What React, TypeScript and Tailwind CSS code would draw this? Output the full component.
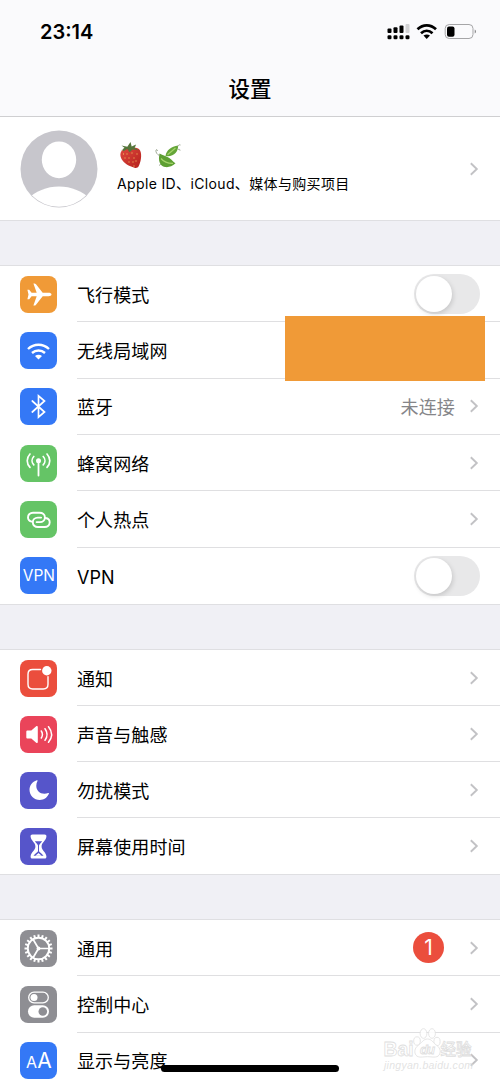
import type { ReactNode } from 'react';

interface RowProps {
  icon: ReactNode;
  color: string;
  label: string;
  children?: ReactNode;
  last?: boolean;
  chevron?: boolean;
}

function Chevron() {
  return (
    <svg className="mr-[1px] shrink-0" width="10" height="14" viewBox="0 0 10 14" fill="none" stroke="#c2c2c5" strokeWidth="1.9">
      <path d="M1.8 1.200 7.800 7l-6 5.800" />
    </svg>
  );
}

function Toggle() {
  return (
    <div className="h-10 w-[66px] rounded-full bg-[#e8e8e9] p-[2px]">
      <div className="size-[36px] rounded-full bg-white shadow-[1px_2px_5px_rgba(0,0,0,0.15)]" />
    </div>
  );
}

function Row({ icon, color, label, children, last, chevron = true }: RowProps) {
  return (
    <div className="flex min-h-0 flex-1 items-center pl-[20.4px]">
      <div className={`flex size-[37px] shrink-0 items-center justify-center overflow-hidden rounded-[8px] ${color}`}>{icon}</div>
      <div className={`ml-[19.6px] flex h-full flex-1 items-center justify-between pr-5 ${last ? '' : 'border-b border-[#dfdfe1]'}`}>
        <span className="pt-[4px] text-[18px] leading-6 tracking-[0.1px]">{label}</span>
        <div className="flex items-center">
          {children}
          {chevron && <Chevron />}
        </div>
      </div>
    </div>
  );
}

function Glyph({ children }: { children: ReactNode }) {
  return (
    <svg width="37" height="37" viewBox="0 0 37 37" fill="none" stroke="white" strokeLinecap="round" strokeLinejoin="round">
      {children}
    </svg>
  );
}

const airplane = (
  <Glyph>
    <path fill="white" stroke="none" d="M31.5 18.5c0-1.1-1.4-1.7-3-1.7h-5.8L16 8.2c-.5-.6-1-.8-1.6-.8h-1l3.300 9.400h-5.100l-2.400-3H7.400l1.100 4.700-1.100 4.700h1.800l2.400-3h5.100l-3.300 9.400h1c.6 0 1.100-.2 1.600-.8l6.700-8.600h5.800c1.600 0 3-.6 3-1.700z" />
  </Glyph>
);

const wifi = (
  <Glyph>
    <path strokeWidth="2.4" strokeLinecap="butt" d="M8 17c6-5.700 15-5.700 21 0M12 21c3.800-3.400 9.200-3.400 13 0" />
    <path fill="white" stroke="none" d="M15 24c2-1.800 5-1.800 7 0l-3.500 3.500z" />
  </Glyph>
);

const bluetooth = (
  <Glyph>
    <path strokeWidth="1.7" strokeLinejoin="miter" d="M12.3 13 24.500 24l-6 5.200v-21.400l6 5.200L12.300 24" />
  </Glyph>
);

const cellular = (
  <Glyph>
    <circle cx="18.5" cy="15.7" r="2.5" fill="white" stroke="none" />
    <path strokeWidth="1.8" d="M18.5 16v14.5" />
    <path strokeWidth="1.7" d="M13.8 11.5c-2.300 2.400-2.300 6 0 8.400M23.200 11.500c2.300 2.400 2.300 6 0 8.400M10 9c-3.700 4-3.700 9.400 0 13.400M27 9c3.700 4 3.700 9.400 0 13.400" />
  </Glyph>
);

const hotspot = (
  <Glyph>
    <path strokeWidth="1.9" d="M11.8 20.600c-2.200-.5-3.800-2-3.800-4.200 0-2.800 2.100-4.700 5-4.700h6.600c3 0 5.300 1.800 5.300 4.700s-2.200 4.700-5 4.700h-3.300" />
    <path strokeWidth="1.9" d="M25.500 17c2.600.4 4.200 2 4.200 4.300 0 2.800-2.200 4.700-5 4.700h-6.800c-3 0-5.100-1.900-5.100-4.700s2.200-4.700 5-4.700h3.300" />
  </Glyph>
);

const notifications = (
  <Glyph>
    <path strokeWidth="1.4" d="M20.500 9.500h-7.800c-3 0-4.700 1.700-4.700 4.700v10.100c0 3 1.700 4.700 4.700 4.700h10.600c3 0 4.700-1.700 4.700-4.700v-7.500" />
    <circle cx="26.800" cy="10.800" r="4.700" fill="white" stroke="none" />
  </Glyph>
);

const sound = (
  <Glyph>
    <path fill="white" stroke="none" d="M7.600 14.500h3.700l4.900-4.200c.7-.6 1.600-.2 1.600.8v14.800c0 1-.9 1.400-1.600.8l-4.900-4.200H7.600c-.8 0-1.300-.5-1.300-1.300v-5.400c0-.8.5-1.300 1.300-1.300z" />
    <path strokeWidth="1.500" d="M21.300 15c1.500 2.300 1.500 4.700 0 7M25 12.700c2.700 3.800 2.700 7.800 0 11.600M28.500 10.700c4 5 4 10.600 0 15.600" />
  </Glyph>
);

const moon = (
  <Glyph>
    <path fill="white" stroke="none" d="M16.800 8.300c-4.600 1.500-7.300 5.300-7.300 9.500 0 5.700 4.500 10.200 10.300 10.200 4.200 0 7.800-2.600 9.200-6.400.2-.6-.3-.9-.8-.6-1.400.6-2.400.8-3.800.8-4.800 0-8.100-3.300-8.100-8 0-1.600.4-3.300 1.200-4.700.3-.5-.1-1-.7-.8z" />
  </Glyph>
);

const hourglass = (
  <Glyph>
    <path fill="white" stroke="none" d="M12.500 6.500h12c1.400 0 2.100.9 1.900 2.300-.5 4.200-4.800 5.700-4.800 9.700s4.300 5.500 4.800 9.700c.2 1.400-.5 2.300-1.900 2.300h-12c-1.400 0-2.100-.9-1.900-2.300.5-4.200 4.800-5.700 4.800-9.700s-4.300-5.500-4.800-9.700c-.2-1.400.5-2.300 1.900-2.300z" />
    <path fill="#5655ca" stroke="none" d="M14.800 13.300h7.400c-1 1.500-2.500 2.500-3.200 4.200v5.700c.8 1.300 3.300 2.500 4.500 4.500h-10c1.200-2 3.700-3.200 4.500-4.500v-5.700c-.7-1.700-2.200-2.700-3.200-4.200z" />
    <path fill="white" stroke="none" d="M18.500 25c1 1 2 1.500 3 2.700h-6c1-1.200 2-1.700 3-2.700z" />
  </Glyph>
);

const gear = (
  <Glyph>
    <circle cx="18.500" cy="18.500" r="10.700" strokeWidth="1.900" />
    {Array.from({ length: 20 }, (_, i) => (
      <path key={i} strokeWidth="2" strokeLinecap="butt" d="M18.500 7.800V4.500" transform={`rotate(${i * 18} 18.500 18.500)`} />
    ))}
    <circle cx="18.500" cy="18.500" r="1.900" fill="white" stroke="none" />
    <path strokeWidth="1.700" d="M18.500 18.500H29M18.500 18.500l-5.300-9M18.500 18.500l-5.300 9" />
  </Glyph>
);

const controls = (
  <Glyph>
    <rect x="8.700" y="6.200" width="19.600" height="10.600" rx="5.300" strokeWidth="1.300" />
    <circle cx="14" cy="11.500" r="3.500" fill="white" stroke="none" />
    <rect x="8" y="19.300" width="21" height="12.400" rx="6.200" fill="white" stroke="none" />
    <circle cx="22.800" cy="25.500" r="4.300" fill="#8e8e93" stroke="none" />
  </Glyph>
);

function StatusIcons() {
  return (
    <svg className="mt-px" width="92" height="20" viewBox="0 0 92 20">
      {[0, 6, 12, 18].map((x, i) => (
        <g key={x}>
          <rect x={1.500 + x} y={[6.500, 5.200, 3.500, 2][i]} width="4" height={[4.500, 5.800, 7.500, 9][i]} rx="1" fill={i === 3 ? '#d2d2d4' : '#000'} />
          <rect x={1.500 + x} y="13.200" width="4" height="4" rx="1.300" fill="#000" />
        </g>
      ))}
      <path d="M31.500 7.300c5.500-5.200 13-5.200 18.500 0M35 11.200c3.400-3.100 8.100-3.100 11.500 0" fill="none" stroke="#000" strokeWidth="2.700" />
      <path d="M37.500 13.600c2-1.600 4.500-1.600 6.500 0L40.700 16.900z" />
      <rect x="59.200" y="2.500" width="27.800" height="14" rx="4" fill="none" stroke="#a5a5a7" />
      <rect x="61" y="4.400" width="7.500" height="10.400" rx="2" />
      <path d="M88.700 7.500v4c1.800-.7 1.800-3.300 0-4" fill="#8e8e90" />
    </svg>
  );
}

function Avatar() {
  return (
    <svg className="shrink-0" width="78" height="78" viewBox="0 0 78 78">
      <defs>
        <clipPath id="avatar">
          <circle cx="39" cy="39" r="37.800" />
        </clipPath>
      </defs>
      <circle cx="39" cy="39" r="38.500" fill="#c7c6cc" />
      <g clipPath="url(#avatar)" fill="white">
        <ellipse cx="39" cy="29.800" rx="17.200" ry="18.400" />
        <path d="M7 70c16-18 48-18 64 0v10H7z" />
      </g>
    </svg>
  );
}

function Strawberry() {
  return (
    <svg width="26" height="30" viewBox="0 0 26 30">
      <defs>
        <linearGradient id="berry" x1="0" y1="0" x2="1" y2="1">
          <stop offset="0" stopColor="#df4a3e" />
          <stop offset="1" stopColor="#b5201d" />
        </linearGradient>
      </defs>
      <path d="M4.500 10c2-2.500 5-2.500 8-3 4-.8 8.700-1 10.600 2.500 2.200 4.200.6 12.500-1.600 16-.8 1.400-2.500 1.700-4 1.200C12 25.200 7 22.300 4.500 18c-1.500-3-1.600-5.700 0-8z" fill="url(#berry)" />
      <path d="M2.800 10.500 7.500 6.800 4.500 4.400l5.800 1.300L13.500 1l1.200 4.500 4.400-2-1.500 3.400 4 2.300-6-.7-3 2.700-2.300-3.200-4.500 2.500.3-2.200z" fill="#55753a" />
      <g fill="#eeb35d">
        {[[6.500, 13], [10, 13], [15, 12], [20, 13], [8, 17], [12, 17], [17, 17], [12, 21], [16, 21], [19, 20], [17, 25]].map(([x, y]) => (
          <ellipse key={`${x}-${y}`} cx={x} cy={y} rx=".55" ry=".8" />
        ))}
      </g>
    </svg>
  );
}

function Leaves() {
  return (
    <svg width="28" height="28" viewBox="0 0 28 28" fill="none">
      <path d="M5.500 11.500c3.300 2 7 2.700 9.800 4.600 3 2.100 4 4 6.200 5.200-3.500 3.300-7 4.200-10.500 3.700C5.800 24.300 4 18.500 5.500 11.500z" fill="#5d9f32" />
      <path d="M11.500 14c1-6 5.500-9.500 12.700-10.500-.2 6.500-4 11.500-12.700 10.500z" fill="#65a638" />
      <path d="M7 16.500c3 3.700 7 5 12 4.900M13.500 12.700l8-6.700" stroke="#a5d36b" strokeWidth="1.200" />
      <path d="M6 14C3 12.300 1.500 10.500 2 8c.7-.8 1.600 0 1.500 1M23.500 4.500c1.300-1.700 2.200-2 3-1.500M24 7.500c1.500-.7 2 0 2 1.200M5 23.500l2-1.500" stroke="#8c9880" strokeWidth=".8" />
    </svg>
  );
}

function Watermark() {
  return (
    <svg className="absolute top-[1026px] left-[380px]" width="98" height="50" viewBox="0 0 98 50" fill="#fff" fillOpacity=".9" stroke="#dedede" strokeWidth=".8" fontFamily="'Liberation Sans', 'Noto Sans CJK SC', sans-serif">
      <text x="3.500" y="30" fontSize="21" fontWeight="700" textLength="30" lengthAdjust="spacingAndGlyphs">Bai</text>
      <ellipse cx="37" cy="15" rx="3.300" ry="4.200" />
      <ellipse cx="43.500" cy="7.500" rx="3.400" ry="4.800" />
      <ellipse cx="52" cy="7.500" rx="3.400" ry="4.800" />
      <ellipse cx="57" cy="15.500" rx="3.100" ry="4.200" />
      <path d="M47.500 13c-4.500 0-5.500 4-9.500 6.500-3.500 2.700-4 7-2 9.700 2.300 3 7 1.500 11.500 1.500s9.200 1.500 11.500-1.500c2-2.700 1.500-7-2-9.700-4-2.500-5-6.500-9.500-6.500z" />
      <text x="40" y="27.500" fontSize="13" fontStyle="italic" fontWeight="700" textLength="15">du</text>
      <text x="60.500" y="29" fontSize="15.500" fontWeight="500" fontFamily="'Noto Sans CJK SC', sans-serif">经验</text>
      <text x="4" y="43" fontSize="10.500" fontStyle="italic" fill="#e0e0e0" stroke="none" textLength="89">jingyan.baidu.com</text>
    </svg>
  );
}

export default function App() {
  return (
    <div className="relative h-[1082px] w-[500px] overflow-hidden bg-[#f0f0f5] font-['Inter','Noto_Sans_CJK_SC',sans-serif] text-black">
      <header className="h-[117px] border-b border-[#cfcfd1] bg-[#fafafc]">
        <div className="flex h-[62px] items-center justify-between pr-[22px] pl-10">
          <span className="pt-[2px] text-[20px] font-semibold">23:14</span>
          <StatusIcons />
        </div>
        <h1 className="pt-[11px] text-center text-[21.5px] leading-8 font-medium">设置</h1>
      </header>

      <section className="flex h-[104px] items-center border-b border-[#dfdfe2] bg-white pr-5 pl-5">
        <Avatar />
        <div className="ml-[19px] flex-1">
          <div className="flex h-[30px] items-center gap-[11px]">
            <Strawberry />
            <Leaves />
          </div>
          <div className="mt-[3px] pb-[3px] text-[14px] leading-5 tracking-[0.36px]">Apple ID、iCloud、媒体与购买项目</div>
        </div>
        <Chevron />
      </section>

      <section className="mt-11 flex h-[340px] flex-col border-y border-[#dfdfe2] bg-white">
        <Row icon={airplane} color="bg-[#f09a37]" label="飞行模式" chevron={false}><Toggle /></Row>
        <Row icon={wifi} color="bg-[#3478f6]" label="无线局域网" chevron={false} />
        <Row icon={bluetooth} color="bg-[#3478f6]" label="蓝牙">
          <span className="mr-[14px] pt-[4px] text-[18px] leading-6 tracking-[0.15px] text-[#858589]">未连接</span>
        </Row>
        <Row icon={cellular} color="bg-[#65c466]" label="蜂窝网络" />
        <Row icon={hotspot} color="bg-[#65c466]" label="个人热点" />
        <Row icon={<span className="text-[15.5px] text-white">VPN</span>} color="bg-[#3478f6]" label="VPN" chevron={false} last><Toggle /></Row>
      </section>

      <section className="mt-11 flex h-[226px] flex-col border-y border-[#dfdfe2] bg-white">
        <Row icon={notifications} color="bg-[#eb4e3d]" label="通知" />
        <Row icon={sound} color="bg-[#ea445a]" label="声音与触感" />
        <Row icon={moon} color="bg-[#5655ca]" label="勿扰模式" />
        <Row icon={hourglass} color="bg-[#5655ca]" label="屏幕使用时间" last />
      </section>

      <section className="mt-11 flex h-[170px] flex-col border-t border-[#dfdfe2] bg-white">
        <Row icon={gear} color="bg-[#8e8e93]" label="通用">
          <span className="mr-[25px] flex size-[31px] items-center justify-center rounded-full bg-[#eb4e3d] text-[21px] text-white">1</span>
        </Row>
        <Row icon={controls} color="bg-[#8e8e93]" label="控制中心" />
        <Row icon={<span className="flex items-baseline text-white"><span className="text-[16px]">A</span><span className="text-[21px]">A</span></span>} color="bg-[#3478f6]" label="显示与亮度" />
      </section>

      {/* Block covering the network name */}
      <div className="absolute top-[316px] left-[285px] h-[65px] w-[200px] bg-[#f09a37]" />
      <Watermark />
      <div className="absolute top-[1065px] left-[161px] h-[6.500px] w-[178px] rounded-full bg-black" />
    </div>
  );
}
